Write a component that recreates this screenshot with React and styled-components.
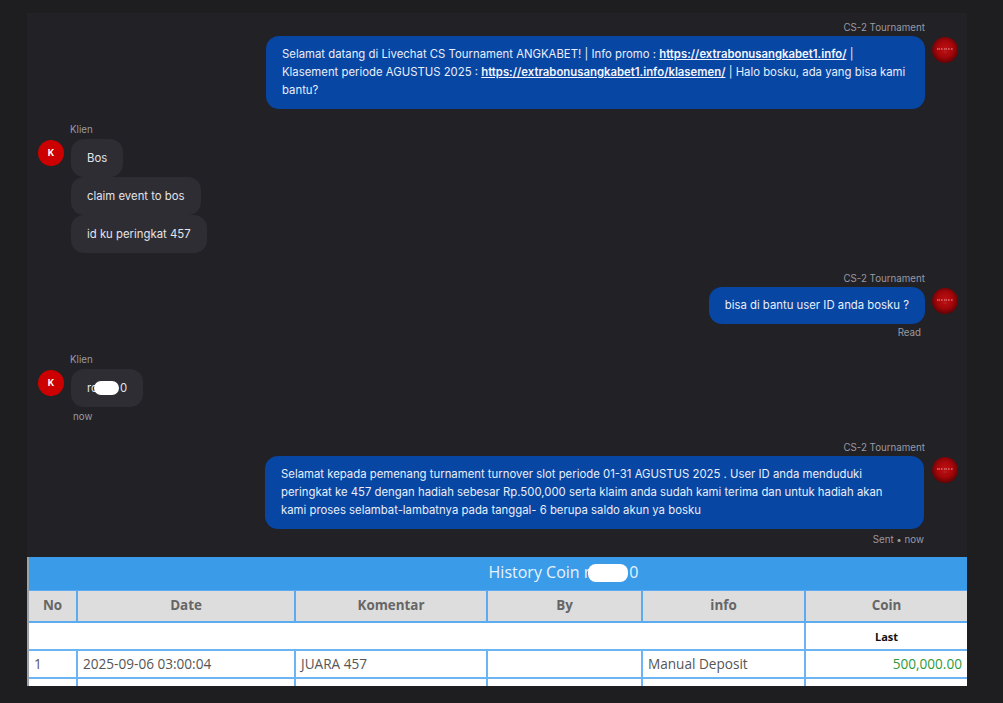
import React from 'react';
import styled, { createGlobalStyle } from 'styled-components';

const GlobalStyle = createGlobalStyle`
	html, body {
		margin: 0;
		padding: 0;
		background: #1e1e20;
	}
`;

const Page = styled.div`
	box-sizing: border-box;
	width: 1003px;
	height: 703px;
	padding: 13px 36px 0 27px;
	overflow: hidden;
	background: #1e1e20;
`;

const ChatPanel = styled.div`
	box-sizing: border-box;
	display: flex;
	flex-direction: column;
	height: 544px;
	padding: 8px 9px 0 11px;
	background: #212126;
	font-family: Inter, "Liberation Sans", sans-serif;
	font-size: 11.35px;
	line-height: 18px;
	color: #e6e8f0;
`;

const Group = styled.div`
	display: flex;
	flex-direction: column;
	align-items: ${ props => props.out ? 'flex-end' : 'flex-start' };
	margin-top: ${ props => props.top || 0 }px;
`;

const Name = styled.div`
	font-size: 9.75px;
	line-height: 13px;
	color: #9a9aa3;
	margin-bottom: ${ props => props.out ? 2 : 3 }px;
	margin-left: ${ props => props.out ? 0 : 32 }px;
	margin-right: ${ props => props.out ? 33 : 0 }px;
`;

const Row = styled.div`
	display: flex;
	align-items: flex-start;
	gap: ${ props => props.gap || 7 }px;
`;

const Stack = styled.div`
	display: flex;
	flex-direction: column;
	align-items: flex-start;
`;

const Bubble = styled.div`
	box-sizing: border-box;
	padding: ${ props => props.out ? '9px 16px 10px' : '10px 16px' };
	border-radius: 13px;
	max-width: 659px;
	background: ${ props => props.out ? '#0746a3' : '#2d2d33' };
	color: ${ props => props.out ? '#e9eefb' : '#e4e4ea' };
`;

const Link = styled.a`
	font-weight: 600;
	color: #f2f5ff;
	text-decoration: underline;
`;

const Blob = styled.span`
	display: inline-block;
	vertical-align: middle;
	width: ${ props => props.w }px;
	height: ${ props => props.h }px;
	margin: -4px 1px -2px ${ props => props.left }px;
	border-radius: 8px;
	background: #fff;
`;

const ClientAvatar = styled.div`
	flex: none;
	width: 26px;
	height: 26px;
	margin-top: 1px;
	border-radius: 50%;
	display: flex;
	align-items: center;
	justify-content: center;
	background: #cc0000;
	color: #fff;
	font-size: 9px;
	font-weight: 700;
`;

const AgentAvatar = styled.div`
	flex: none;
	width: 26px;
	height: 26px;
	margin-top: 1px;
	border-radius: 50%;
	display: flex;
	align-items: center;
	justify-content: center;
	background: radial-gradient(circle at 50% 46%, #c01013 0%, #a5070a 42%, #620205 74%, #2a0103 100%);
`;

const Meta = styled.div`
	font-size: 9.75px;
	line-height: 13px;
	color: #9a9aa3;
	margin-top: ${ props => props.gap }px;
	margin-left: ${ props => props.out ? 0 : 35 }px;
	margin-right: ${ props => props.out ? props.right : 0 }px;
`;

const TableWrap = styled.div`
	box-sizing: border-box;
	width: 940px;
	height: 129px;
	overflow: hidden;
	background: #fff;
	border-left: 2px solid #9aa4ad;
	font-family: "Open Sans", "Noto Sans", sans-serif;
`;

const Title = styled.div`
	height: 33px;
	padding-left: 131px;
	line-height: 31px;
	text-align: center;
	font-size: 16px;
	color: #e8f3fd;
	background: #3a9be8;
`;

const CoinTable = styled.table`
	width: 938px;
	table-layout: fixed;
	border-collapse: collapse;
	font-size: 13.6px;
`;

const Head = styled.th`
	height: 28px;
	padding: 0 0 2px;
	border: 2px solid #5cabf0;
	border-top-width: 1px;
	background: #dddddd;
	color: #666;
	font-weight: 700;
	font-size: 13.4px;
	text-align: center;

	&:first-child { border-left: 0; }
	&:last-child { border-right: 0; }
`;

const Cell = styled.td`
	height: 24px;
	padding: 0 5px 2px;
	border: 2px solid #6db5f2;
	color: #555;
	text-align: ${ props => props.align || 'left' };

	&:first-child { border-left: 0; }
	&:last-child { border-right: 0; }
`;

const Last = styled.span`
	font-size: 11px;
	font-weight: 700;
	color: #111;
`;

const Amount = styled.span`
	color: #2f9a3a;
`;

const columns = [
	{ label: 'No', width: 48 },
	{ label: 'Date', width: 218 },
	{ label: 'Komentar', width: 192 },
	{ label: 'By', width: 155 },
	{ label: 'info', width: 163 },
	{ label: 'Coin', width: 162 },
];

function AgentLogo() {
	return (
		<AgentAvatar>
			<svg width="16" height="6" viewBox="0 0 16 6" aria-hidden="true">
				<path d="M0 2h3M4 2h2M7 2h3M11 2h2M14 2h2" stroke="#d96a6c" strokeWidth="1.6" strokeDasharray="1.6 0.4" />
				<path d="M6.5 5h3" stroke="#a83a3c" strokeWidth="0.8" />
			</svg>
		</AgentAvatar>
	);
}

function OutMessage( props ) {
	return (
		<Group out top={ props.top }>
			<Name out>CS-2 Tournament</Name>
			<Row gap={ props.gap }>
				<Bubble out>{ props.children }</Bubble>
				<AgentLogo />
			</Row>
			{ props.meta && <Meta out right={ props.metaRight } gap={ props.metaGap }>{ props.meta }</Meta> }
		</Group>
	);
}

function InMessage( props ) {
	return (
		<Group top={ props.top }>
			<Name>Klien</Name>
			<Row>
				<ClientAvatar>K</ClientAvatar>
				<Stack>
					{ props.children }
				</Stack>
			</Row>
			{ props.meta && <Meta gap={ 3 }>{ props.meta }</Meta> }
		</Group>
	);
}

export default function App() {
	return (
		<>
			<GlobalStyle />
			<Page>
				<ChatPanel>
					<OutMessage>
						Selamat datang di Livechat CS Tournament ANGKABET! | Info promo : <Link>https://extrabonusangkabet1.info/</Link> | Klasement periode AGUSTUS 2025 : <Link>https://extrabonusangkabet1.info/klasemen/</Link> | Halo bosku, ada yang bisa kami bantu?
					</OutMessage>
					<InMessage top={ 14 }>
						<Bubble>Bos</Bubble>
						<Bubble>claim event to bos</Bubble>
						<Bubble>id ku peringkat 457</Bubble>
					</InMessage>
					<OutMessage top={ 19 } meta="Read" metaRight={ 37 } metaGap={ 2 }>
						bisa di bantu user ID anda bosku ?
					</OutMessage>
					<InMessage top={ 14 } meta="now">
						<Bubble>ro<Blob w={ 25 } h={ 14 } left={ -4 } />0</Bubble>
					</InMessage>
					<OutMessage top={ 18 } gap={ 8 } meta="Sent • now" metaRight={ 34 } metaGap={ 4 }>
						Selamat kepada pemenang turnament turnover slot periode 01-31 AGUSTUS 2025 . User ID anda menduduki peringkat ke 457 dengan hadiah sebesar Rp.500,000 serta klaim anda sudah kami terima dan untuk hadiah akan kami proses selambat-lambatnya pada tanggal- 6 berupa saldo akun ya bosku
					</OutMessage>
				</ChatPanel>
				<TableWrap>
					<Title>History Coin r<Blob w={ 40 } h={ 18 } left={ -2 } />0</Title>
					<CoinTable>
						<colgroup>
							{ columns.map( column => <col key={ column.label } width={ column.width } /> ) }
						</colgroup>
						<thead>
							<tr>
								{ columns.map( column => <Head key={ column.label }>{ column.label }</Head> ) }
							</tr>
						</thead>
						<tbody>
							<tr>
								<Cell colSpan={ 5 }></Cell>
								<Cell align="center"><Last>Last</Last></Cell>
							</tr>
							<tr>
								<Cell>1</Cell>
								<Cell>2025-09-06 03:00:04</Cell>
								<Cell>JUARA 457</Cell>
								<Cell></Cell>
								<Cell>Manual Deposit</Cell>
								<Cell align="right"><Amount>500,000.00</Amount></Cell>
							</tr>
							<tr>
								<Cell></Cell>
								<Cell></Cell>
								<Cell></Cell>
								<Cell></Cell>
								<Cell></Cell>
								<Cell></Cell>
							</tr>
						</tbody>
					</CoinTable>
				</TableWrap>
			</Page>
		</>
	);
}
